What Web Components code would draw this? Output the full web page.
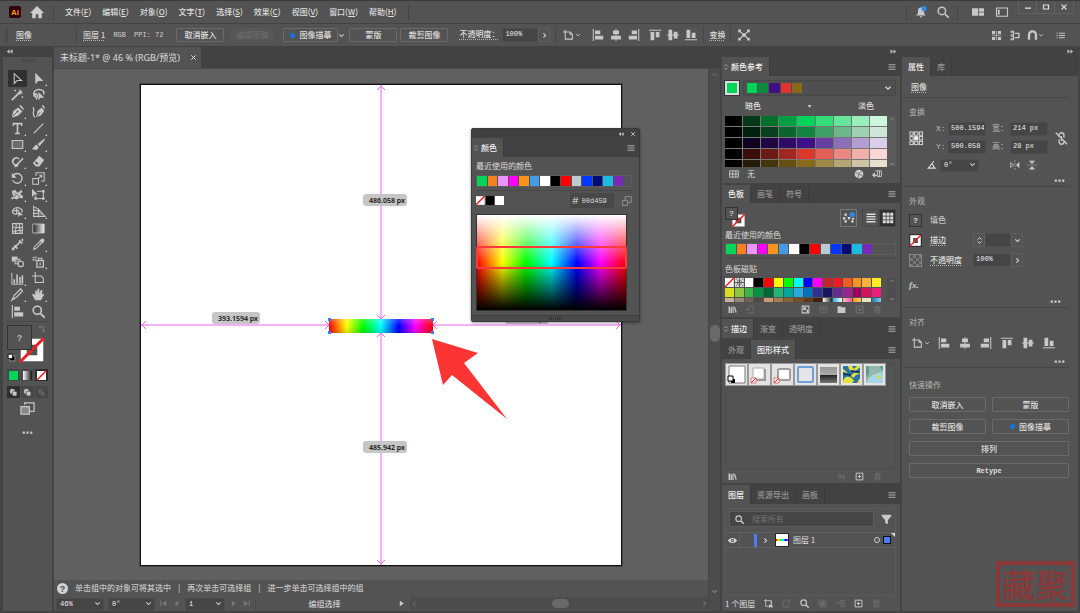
<!DOCTYPE html>
<html lang="zh-CN">
<head>
<meta charset="utf-8">
<meta name="viewport" content="width=device-width, initial-scale=1">
<title>未标题-1</title>
<style>
  html, body { margin: 0; height: 100%; background: #535353; }
  body {
    --panel: #535353; --dark: #424242; --line: #474747; --edge: #666; --field: #454545; --text: #dedede; --dim: #a6a6a6;
    color: var(--text);
    font: 8px/12px "Noto Sans CJK SC", "Noto Sans", sans-serif;
  }
</style>
</head>
<body>
<ai-app></ai-app>
<script>
const BASE = `
  *, *::before, *::after { box-sizing: border-box; }
  :host { display: block; min-width: 0; }
  :host([hidden]) { display: none; }
  button, input, select { font: inherit; color: inherit; margin: 0; padding: 0; border: 0; background: none; border-radius: 0; outline: 0; min-width: 0; }
  a { color: inherit; }
  .mono { font: 7px/12px "Liberation Mono", "Noto Sans CJK SC", monospace; }
  .dot { text-decoration: underline dotted #b5b5b5 1px; text-underline-offset: 2px; }
  .row { display: flex; align-items: center; }
  .grow { flex: 1; }
`;

function define(name, css, html) {
  const fixed = typeof html === 'string' ? document.createElement('template') : null;
  if (fixed) fixed.innerHTML = `<style>${BASE}${css}</style>${html}`;
  customElements.define(name, class extends HTMLElement {
    constructor() { super(); this.attachShadow({ mode: 'open' }); }
    connectedCallback() {
      if (this.shadowRoot.childNodes.length) return;
      if (fixed) this.shadowRoot.append(fixed.content.cloneNode(true));
      else this.shadowRoot.innerHTML = `<style>${BASE}${css}</style>${html(this)}`;
    }
  });
}

/* Icons: 16 x 16 grid; s = stroked, f = filled with the current colour */
const s = (d, w = 1.4) => `<path d="${d}" fill="none" stroke="currentColor" stroke-width="${w}"/>`;
const f = d => `<path d="${d}" fill="currentColor"/>`;
const alignL = f('M1 0h1.4v16H1zM4 2h7v5H4zM4 9h11v5H4z');
const alignC = f('M7.4 0h1.2v16H7.400zM4 2h8v5H4zM1.500 9h13v5H1.500z');
const alignR = f('M13.600 0H15v16h-1.400zM5 2h7v5H5zM1 9h11v5H1z');
const alignT = f('M0 1h16v1.400H0zM2 4h5v11H2zM9 4h5v7H9z');
const alignM = f('M0 7.400h16v1.200H0zM2 1h5v14H2zM9 3.500h5v9H9z');
const alignB = f('M0 13.600h16V15H0zM2 1h5v11H2zM9 5h5v7H9z');
const ICONS = {
  home: f('M8 1 0 9h2.500v6h4v-4.500h3V15h4V9H16z'),
  bell: f('M8 2C4.500 2 4 5 4 7.500S3 11 1.500 12.500h13C13 11 12 10 12 7.500S11.500 2 8 2zM6 13.500h4L8 16z') + '<circle cx="12" cy="3.500" r="3.400" fill="#2a8cf0"/>',
  search: s('M10.700 10.700 15.500 15.500', 2.400) + '<circle cx="6.500" cy="6.500" r="5" fill="none" stroke="currentColor" stroke-width="2"/>',
  work: f('M0 3h8v10H0zM9 3h7v4.500H9zM9 8.500h7V13H9z'),
  screen: s('M.7 2.700h14.600v11H.700z', 1.500) + f('M2.500 5H5v6.500H2.500z'),
  min: f('M2 9h12v2.600H2z'), max: s('M3 4h10v8H3z', 2.400), close: s('m3 3 10 10M13 3 3 13', 2.200),
  down: s('m3 5.500 5 5 5-5', 2.400), right: s('m5.500 3 5 5-5 5', 2.400), left: s('m10.500 3-5 5 5 5', 1.500), up: s('m3 10.500 5-5 5 5', 1.500),
  updown: s('m3.500 6 4.500-4.500L12.500 6M3.500 10l4.500 4.500 4.500-4.500', 2.200),
  dleft: f('M8 3v10L2 8zM15 3v10L9 8z'), dright: f('M1 3v10l6-5zM8 3v10l6-5z'),
  menu: s('M1 3.500h14M1 8h14M1 12.500h14', 1.800),
  dots: f('M1 6.500h3.200v3.200H1zM6.400 6.500h3.200v3.200H6.400zM11.800 6.500H15v3.200h-3.200z'),
  board: s('M3 1v12.500h9.500V7L9.500 4H0M9.500 4v3h3', 1.400),
  alignL, alignC, alignR, alignT, alignM, alignB,
  isolate: f('M5.500 5.500h5v5h-5z') + s('M1 4.500V1.500h3M12 1.500h3v3M15 11.500v3h-3M4 14.500H1v-3M1.500 2l4 4M14.500 2l-4 4M1.500 14l4-4M14.500 14l-4-4', 1.500),
  grid4: f('M1.500 1.500H6v4.500H1.500zM10 1.500h4.500V6H10zM1.500 10H6v4.500H1.500zM10 10h4.500v4.500H10zM7.500 1h1v14h-1zM1 7.500h14v1H1z'),
  snap: f('M1 1h3v3H1zM1 6.500h3v3H1zM1 12h3v3H1z') + s('M5 1v14M7 5h6v6H7', 1.900),
  magnet: s('M3 14V7a5 5 0 0 1 10 0v7', 3.400),
  list: s('M5 4h11M5 8h11M5 12h11', 1.700) + f('M1 3h2v2H1zM1 7h2v2H1zM1 11h2v2H1z'),
  select: s('M4 2v12l3.500-3.500H13z', 1.300), direct: f('M4 1v14l3.700-4H14z'),
  wand: s('M1 15 10 6', 2.200) + f('M11 1l.8 2.600 2.700-.8-1.700 2.100L15 7l-2.800-.3L11 9l-.8-2.500L7.500 6l2.300-1.400zM4 2h2v2H4zM13 10h2v2h-2z'),
  lasso: s('M5 11C1 10 1 3 7 2s9 3 7 6M5 11c-2-1-2-4 0-4s2 5 0 7', 1.800) + f('M8 5v10l2.500-3H15z'),
  pen: f('M1 15 3 7l6-4 5 5-5 5-6 2zM10 1l5 5 1-1-4-5z') + '<path d="M2 14 7 9" stroke="#535353"/><circle cx="8" cy="8" r="1.300" fill="#535353"/>',
  curve: f('M5 15 7 7l5-4 3 4-4 6zM12 1l3 4 1-1-2-4z') + '<path d="m6 14 4-5" stroke="#535353"/>' + s('M1 3c4 2-3 9 3 12', 1.600),
  type: f('M2 1h12v4h-1.500L12 3H9v10l2 .500V15H5v-1.500L7 13V3H4l-.500 2H2z'),
  line: s('M2 14 14 2', 1.600), rect: '<path d="M1.500 3h13v10h-13z" fill="#6d6d6d" stroke="currentColor" stroke-width="1.300"/>',
  brush: f('M15 1 7 7.500l2 2.500L16 2zM6 8.500C3 8 3 12 0 13.500c4 2 8 1 8-2.500z'),
  shaper: s('M9 12A4.500 4.500 0 1 1 10 5M6 13l9-9', 2) + f('M5 11l4 3-5 1z'),
  eraser: f('M9 1l6 5-6 8H5L1 10zM3.500 9.500 6.500 12 8 10.500 5 8z'),
  rotate: s('M3 4a6 6 0 1 1-1 6', 1.600) + f('M1 1v6h6z'),
  scale: s('M1 8h7v7H1zM5 5V1h10v10h-4M7 9l5-5M9 4h3v3', 1.300),
  puppet: f('M1 4l4-2 3 4 5-4 1 3-3 2 4 3-1 3-4-1-3 2-3-1-3 1-1-2 3-1-1-3z') + '<path d="m4 6 7 5M3 11l3-2" stroke="#535353"/>',
  free: f('M0 1v10l3-3h4z') + s('M6 4h8v9H4V9', 1.200) + f('M12.500 2.500h3v3h-3zM12.500 11.500h3v3h-3zM3 11.500h3v3H3z'),
  builder: s('M9 10c-4 3-8 0-7-3s5-5 9-3 3 4 2 5M3 7h7M7 4v7', 1.400) + f('M9 7v8l2-2.500h4z'),
  persp: s('M2 1v14M2 2l6 3v10M2 6l9 2M2 10l12 1M2 14h14L8 5', 1.300),
  mesh: s('M2 2h12v12H2zM2 7c4-3 7 3 12-1M2 11c5 2 7-3 12 0M6 2c3 4-3 7 0 12M11 2c-3 5 2 7 0 12', 1.300),
  gradient: '<linearGradient id="g"><stop stop-color="#222"/><stop offset="1" stop-color="#eee"/></linearGradient><path d="M1 2.500h14v11H1z" fill="url(#g)" stroke="#ccc"/>',
  width: s('M2 14 12 4M4 9l4 4M10 3l4 4', 2) + f('M13 1h2v3h-2zM1 12h3v3H1z'),
  dropper: s('M2 14 3 11 9 5l2 2-6 6z', 1.300) + f('M9 3l4 4 2-3c1-2-2-4-3-3z'),
  blend: f('M1 2h7v6H1z') + '<rect x="5" y="5" width="6" height="6" fill="#858585" stroke="currentColor"/><circle cx="12" cy="11" r="3.300" fill="#535353" stroke="currentColor" stroke-width="1.400"/>',
  spray: s('M6 7h8v8H6zM8 7V4h4v3M10 9.500v3', 1.500) + f('M1 2h2v2H1zM4 2h2v2H4zM1 5h2v2H1zM4 5h1v2H4z'),
  graph: s('M1 1v14h14', 1.200) + f('M3 9h2v5H3zM6.500 3h2v11h-2zM10 6h2v8h-2zM13 4h2v10h-2z'),
  slice: s('M1 15 4 9 12 1l2 3-7 7z', 1.500), hand: f('M4 15 0 8l2-1 2 2V3h2v4l1-6h2v6l2-5 2 1-1 5 2-1 1 1-4 7z'),
  artbd: s('M4 0v13h10V8l-2.500-3H0', 1.300),
  swap: s('M2 4h9v9', 2) + f('M5 0v8L1 4zM7 11h8l-4 4z'),
  mode: '<circle cx="6" cy="6" r="4.500" fill="#bbb"/><rect x="6" y="6" width="8" height="8" rx="2" fill="currentColor" stroke="#444"/>',
  screens: s('M5 3V1h10v9h-5', 1.300) + '<path d="M1 5h9v8H1z" fill="#888" stroke="currentColor" stroke-width="1.300"/>',
  lib: f('M1 2h2.500v12H1zM4.500 4H7v10H4.500zM8 2h2v12H8zM10.500 4l2-1 3 10-2 1z'),
  tbl: s('M1 3h14v10H1zM1 8h14M6 3v10M11 3v10', 1.500), wheel: '<circle cx="8" cy="8" r="7" fill="#ccc"/>' + '<path d="M8 8 2 5M8 8l6 3M8 8l4-6M8 8l-2 7" stroke="#666" stroke-width="1.200"/>',
  addto: s('M5 3h10v9H8M9 3v9M12 3v9', 1.500) + f('M3 6h2v3h3v2H5v3L0 10z'),
  note: s('M3 2h10v12H3M8 8H0M3 5 0 8l3 3', 1.300), kinds: s('M2 2h12v12H2z', 1.800) + f('M4 4h5v5H4zM10 8h3v5h-3z'),
  lines: s('M2 3h12v10H2zM5 6h6M5 8.500h6', 1.300), folder: f('M1 2h5l2 2h7v10H1z'),
  plus: s('M2 2h12v12H2zM8 5v6M5 8h6', 1.700), trash: s('M2 4h12M6 4V2h4v2M4 4v10h8V4M6.500 6v6M9.500 6v6', 1.300),
  unlink: s('M6 5C2 4 1 10 5 11h2M10 5c5 0 5 6 1 6M2 1l12 14M6 8h5', 1.400),
  chain: s('M5 6V4a3 3 0 0 1 6 0v3M5 9v3a3 3 0 0 0 6 0v-2M1 1l14 14M8 5v6', 1.700),
  scatter: f('M2 2h3v3H2zM6.500 6.500h3v3h-3zM2 11h3v3H2zM11 11h3v3h-3zM5 5l1 1-1 0zM0 7h3v3H0zM12 8h3v2h-3z') + '<circle cx="12.500" cy="3.500" r="3.500" fill="#2f86e4"/>',
  rows: s('M2 3h12M2 6.300h12M2 9.600h12M2 13h12', 1.700), cells: f('M1 1h4v4H1zM6 1h4v4H6zM11 1h4v4h-4zM1 6h4v4H1zM6 6h4v4H6zM11 6h4v4h-4zM1 11h4v4H1zM6 11h4v4H6zM11 11h4v4h-4z'),
  funnel: f('M1 1h14v2L10 9v6l-4-2V9L1 3z'), eye: f('M0 8c3-6 13-6 16 0-3 6-13 6-16 0z') + '<circle cx="8" cy="8" r="3" fill="#535353"/><circle cx="8" cy="8" r="1.500" fill="#ccc"/>',
  crop: s('M3 0v13h7M0 3h13v6M13 3v8', 1.500) + f('M9 10h6v6l-3-2-3 2z'), out: s('M8 4H2v10h10V9M8 9l6-6M10 2h4v4', 1.300),
  clip: s('M2 2h9v9H2zM5 5h9v9H5z', 1.300) + f('M6 6h4v4H6z'), into: s('M7 3h8v10H7M11 3v10M1 3v5h7M6 5l3 3-3 3', 1.300),
  ref: [1, 6, 11].flatMap(y => [1, 6, 11].map(x => `<rect x="${x}" y="${y}" width="3.500" height="3.500" fill="${x === 6 && y === 6 ? '#fff' : 'none'}" stroke="currentColor"/>`)).join('') + s('M4 2.700h2M10 2.700h1M4 13h2M10 13h1M2.700 5v1M2.700 10v1M13 5v1M13 10v1', 1),
  angle: s('M14 13H2L11 2M7 6c3 1 4 4 4 7', 1.800), fliph: s('M1 4v8l5-4zM8 1v2M8 5v2M8 9v2M8 13v2', 1.300) + f('M15 3v10L9.500 8z'), flipv: s('M1 8h2M5 8h2M9 8h2M13 8h2', 1.300) + f('M3 1h10L8 6.500zM3 15h10L8 9.500z'),
  first: f('M2 3h2v10H2zM13 3v10L5 8z'), prev: f('M11 3v10L4 8z'), next: f('M5 3v10l7-5z'), last: f('M12 3h2v10h-2zM3 3v10l8-5z'),
  copies: s('M1 7h8v8H1zM5 7V1h10v9H9', 1.400),
  help: '<circle cx="8" cy="8" r="8" fill="currentColor"/><text x="8" y="12.500" text-anchor="middle" font-family="Liberation Sans" font-weight="bold" font-size="13" fill="#4a4a4a">?</text>',
  deflt: '<path d="M5 5h9v9H5z" fill="#000" stroke="#ddd"/><path d="M2 2h8v8H2z" fill="#fff" stroke="#000" stroke-width="1.500"/>',
  box: '<path d="M2.500 2.500h11v11h-11z" fill="none" stroke="#fff" stroke-width="4"/><path d="M0 16 16 0" stroke="#e8202a" stroke-width="2"/>',
  none: '<path d="M0 0h16v16H0z" fill="#fff"/><path d="M0 16 16 0" stroke="#f01818" stroke-width="2.500"/>',
  reg: '<path d="M0 0h16v16H0z" fill="#ddd"/><circle cx="8" cy="8" r="4" fill="none" stroke="#444"/><path d="M8 0v16M0 8h16M2 2l2 2M14 2l-2 2M2 14l2-2M14 14l-2-2" stroke="#444" stroke-width="1.500"/>'
};
define('ui-icon', ':host { display: block; flex: none; width: var(--size, 12px); height: var(--size, 12px); } svg { display: block; width: 100%; height: 100%; overflow: visible; }',
  el => `<svg viewBox="0 0 16 16" aria-hidden="true">${ICONS[el.getAttribute('name')] || ''}</svg>`);

define('ui-button', `
  button { display: flex; width: 100%; height: var(--h, 14px); align-items: center; justify-content: center; gap: 4px; border: 1px solid #6a6a6a; border-radius: 1px; font-weight: 500; white-space: nowrap; }
  button:disabled { color: #6b6b6b; border-color: #585858; background: #575757; }
  i { width: 5px; height: 5px; border-radius: 50%; background: #1473e6; }
`, el => `<button type="button" ${el.hasAttribute('off') ? 'disabled' : ''}>${el.hasAttribute('spot') ? '<i></i>' : ''}<slot></slot></button>`);

define('icon-button', `
  :host { display: inline-block; flex: none; }
  button { display: block; color: var(--c, #c8c8c8); }
`, el => `<button type="button" aria-label="${el.getAttribute('label') || el.getAttribute('name')}"><ui-icon name="${el.getAttribute('name')}"></ui-icon></button>`);

/* Text field with its label */
define('ui-field', `
  label { display: flex; align-items: center; }
  span { flex: none; width: var(--lw, auto); color: var(--lc, #b8b8b8); white-space: nowrap; font-family: "Liberation Mono", "Noto Sans CJK SC", monospace; }
  input { flex: 1; width: 20px; height: 14px; padding: 0 1px 2px 2px; background: var(--field); border: 1px solid #4d4d4d; font: 7px/10px "Liberation Mono", monospace; color: #f0f0f0; }
`, el => `<label><span class="${el.hasAttribute('dotted') ? 'dot' : ''}">${el.getAttribute('label')}</span><input value="${el.getAttribute('value') || ''}" aria-label="${el.getAttribute('name') || el.getAttribute('label')}"></label>`);

define('ui-select', `
  :host { position: relative; }
  select { appearance: none; width: 100%; height: 13px; padding: 0 14px 1px 3px; background: var(--field); border: 1px solid #4d4d4d; font: 7px/10px "Liberation Mono", monospace; color: #f0f0f0; }
  ui-icon { --size: 7px; position: absolute; right: 3px; top: 3px; pointer-events: none; color: #ccc; }
`, el => `<select aria-label="${el.getAttribute('label')}"><option>${el.getAttribute('value') || ''}</option></select><ui-icon name="down"></ui-icon>`);

define('swatch-strip', `
  :host { border: 1px solid #4b4b4b; }
  div { display: grid; grid-auto-rows: var(--rh, 10px); gap: 1px; overflow: hidden; }
`, el => {
  const c = el.getAttribute('colors').split(' ');
  return `<div style="grid-template-columns:repeat(${el.getAttribute('cols') || c.length},1fr)">${c.map(x => ICONS[x] ? `<ui-icon style="--size:100%" name="${x}"></ui-icon>` : `<b style="background:${x.replace('~', 'linear-gradient(90deg,').replace('^', ')')}"></b>`).join('')}</div>`;
});
const RECENT = '#00d459 #f58020 #e994ff #ff00ff #f7941e #4499e8 #fff #000 #f00 #bccad4 #0038ff #000c76 #1cb9e2 #7a2ab8';

/* Panel tab row: first of the comma-separated names is selected unless "on" says otherwise */
define('panel-tabs', `
  nav { display: flex; height: var(--th, 19px); background: var(--dark); align-items: stretch; }
  button { display: flex; align-items: center; gap: 2px; padding: 0 6px; border-right: 1px solid #3b3b3b; color: #949494; font-weight: 500; white-space: nowrap; }
  button.on { background: var(--panel); color: #f0f0f0; }
  .wide button.on { padding: 0 6px 0 1px; }
  .updn { --size: 6px; color: #aaa; }
  .m { margin: auto 4px auto auto; --size: 8px; color: #b8b8b8; }
`, el => {
  const on = +(el.getAttribute('on') || 0);
  return `<nav class="${el.hasAttribute('fold') ? 'wide' : ''}">${el.getAttribute('tabs').split(',').map((t, i) => `<button type="button" class="${i === on ? 'on' : ''}">${i === on && el.hasAttribute('fold') ? '<ui-icon class="updn" name="updown"></ui-icon>' : ''}${t}</button>`).join('')}${el.hasAttribute('plain') ? '' : '<ui-icon class="m" name="menu"></ui-icon>'}</nav>`;
});

define('menu-bar', `
  :host { display: flex; align-items: center; height: 24px; background: var(--panel); border-top: 1px solid #3a3a3a; border-bottom: 1px solid #434343; padding-left: 9px; }
  .logo { width: 12px; height: 12px; flex: none; }
  .home { margin-left: 9px; --size: 14px; color: #cfcfcf; }
  .sep { width: 1px; height: 15px; background: #464646; }
  nav { display: flex; gap: 11px; padding: 0 11px 0 11px; }
  nav a { text-decoration: none; white-space: nowrap; font-weight: 500; }
  .tools { display: flex; align-items: center; color: #cfcfcf; }
  .win { display: flex; align-self: start; margin: 0 6px 0 10px; height: 13px; border: 1px solid #626262; border-top: 0; }
  .win button { width: 18px; display: grid; place-items: center; border-right: 1px solid #626262; --size: 8px; }
  .win button:last-child { border: 0; }
`, `
  <svg class="logo" viewBox="0 0 12 12"><rect width="12" height="12" rx="2" fill="#330000"/><text x="6" y="9" text-anchor="middle" font-family="Liberation Sans" font-weight="bold" font-size="8" fill="#ff9a00">Ai</text></svg>
  <ui-icon class="home" name="home"></ui-icon><span class="sep" style="margin-left:9px"></span>
  <nav>
    <a href="#">文件(<u>F</u>)</a><a href="#">编辑(<u>E</u>)</a><a href="#">对象(<u>O</u>)</a><a href="#">文字(<u>T</u>)</a><a href="#">选择(<u>S</u>)</a><a href="#">效果(<u>C</u>)</a><a href="#">视图(<u>V</u>)</a><a href="#">窗口(<u>W</u>)</a><a href="#">帮助(<u>H</u>)</a>
  </nav>
  <span class="sep"></span><span class="grow"></span>
  <div class="tools"><span class="sep"></span>
    <icon-button style="margin-left:8px" name="bell"></icon-button><icon-button style="margin-left:10px" name="search"></icon-button>
    <span class="sep" style="margin:0 14px 0 8px"></span><icon-button name="work"></icon-button><icon-button style="margin-left:12px" name="screen"></icon-button>
  </div>
  <div class="win"><button aria-label="最小化"><ui-icon name="min"></ui-icon></button><button aria-label="最大化"><ui-icon name="max"></ui-icon></button><button aria-label="关闭"><ui-icon name="close"></ui-icon></button></div>
`);

define('control-bar', `
  :host { display: flex; align-items: center; height: 23px; background: var(--panel); border-bottom: 1px solid #434343; white-space: nowrap; font-weight: 500; }
  .grip { width: 3px; height: 13px; margin: 0 8px 0 5px; background: repeating-linear-gradient(#424242 0 1px, transparent 1px 2px); }
  .sep { width: 1px; height: 16px; background: #464646; flex: none; }
  .what { width: 60px; }
  .info { display: flex; gap: 8px; padding: 0 13px 0 6px; color: #d0d0d0; }
  .step { width: 12px; height: 14px; border: 1px solid #5e5e5e; display: grid; place-items: center; --size: 7px; }
  .al { display: flex; gap: 6px; padding: 0 12px 0 11px; }
  .al icon-button:nth-child(4) { margin-left: 3px; }
  .right { display: flex; gap: 6px; padding-right: 15px; --size: 11px; align-items: center; }
`, `
  <span class="grip"></span><span class="what"><span class="dot">图像</span></span><span class="sep"></span>
  <div class="info"><span class="dot">图层 1</span><span class="mono">RGB</span><span class="mono">PPI: 72</span></div>
  <ui-button style="width:48px">取消嵌入</ui-button>
  <ui-button style="width:42px;margin-left:7px" off>编辑原稿</ui-button>
  <ui-button style="width:55px;margin-left:10px" spot>图像描摹</ui-button>
  <icon-button style="--size:7px" name="down"></icon-button>
  <ui-button style="width:48px;margin-left:4px">蒙版</ui-button>
  <ui-button style="width:48px;margin:0 11px 0 3px">裁剪图像</ui-button>
  <ui-field style="width:79px;--lw:43px;--lc:#dedede" dotted label="不透明度：" value="100%"></ui-field>
  <button class="step" aria-label="不透明度滑块"><ui-icon name="right"></ui-icon></button>
  <span class="sep" style="margin:0 7px 0 5px"></span>
  <icon-button name="board"></icon-button><icon-button style="--size:6px" name="down"></icon-button>
  <div class="al"><icon-button name="alignL"></icon-button><icon-button name="alignC"></icon-button><icon-button name="alignR"></icon-button><icon-button name="alignT"></icon-button><icon-button name="alignM"></icon-button><icon-button name="alignB"></icon-button></div>
  <span class="sep" style="margin-left:-6px"></span><span class="dot" style="margin:0 5px">变换</span><span class="sep" style="margin-right:7px"></span>
  <icon-button name="isolate"></icon-button><span class="grow"></span>
  <div class="right"><icon-button name="grid4"></icon-button><icon-button name="snap" style="margin-left:2px"></icon-button><icon-button name="magnet"></icon-button><icon-button style="--size:6px;margin-left:-6px" name="down"></icon-button><icon-button style="margin-left:6px;--size:9px" name="list"></icon-button></div>
`);

const TOOLS = 'select direct. wand lasso pen. curve type. line. rect. brush. shaper. eraser. rotate. scale. puppet. free. builder. persp. mesh gradient width dropper. blend spray. graph. artbd slice. hand. alignL search'.split(' ');
define('tool-box', `
  :host { background: var(--panel); border-left: 3px solid #434343; border-right: 2px solid #434343; color: #c8c8c8; }
  .head { height: 10px; background: var(--dark); padding: 1px 3px; --size: 7px; }
  .grip { width: 14px; height: 3px; margin: 2px auto 0; background: repeating-linear-gradient(90deg, #424242 0 1px, transparent 1px 2px); }
  .tools { display: grid; grid-template-columns: 21px 21px; justify-content: center; grid-auto-rows: 1fr; height: 250px; margin-top: 8px; }
  .tools button { display: grid; place-items: center; position: relative; --size: 13px; margin: 0 1px; }
  .tools .on { background: #303030; border-radius: 1px; }
  .tools .more::after { content: ""; position: absolute; right: 1px; bottom: 1px; border: 1px solid #ccc; border-left-color: transparent; border-top-color: transparent; }
  hr { border: 0; border-top: 1px solid #474747; margin: 1px 4px 2px; }
  .paint { position: relative; height: 40px; }
  .fill { position: absolute; left: 4px; top: 1px; width: 25px; height: 25px; background: #535353; border: 1px solid #333; display: grid; place-items: center; font: bold 9px "Liberation Sans", sans-serif; color: #bbb; z-index: 1; }
  .stroke { position: absolute; left: 17px; top: 14px; --size: 24px; }
  .swap { position: absolute; left: 35px; top: 1px; --size: 8px; color: #777; }
  .def { position: absolute; left: 4px; top: 29px; --size: 9px; }
  .three { display: grid; grid-template-columns: repeat(3, 13px); justify-content: center; height: 12px; margin-top: 5px; gap: 1px; }
  .three button { display: grid; place-items: center; background: #474747; --size: 9px; }
  .three i { width: 9px; height: 9px; }
  .bottom { display: grid; justify-items: center; gap: 10px; margin-top: 4px; }
`, `
  <div class="head"><ui-icon name="dleft"></ui-icon></div><div class="grip"></div>
  <div class="tools">${TOOLS.map((t, i) => `<button type="button" aria-label="${t.replace('.', '')}" class="${i ? '' : 'on'} ${t.endsWith('.') ? 'more' : ''}"><ui-icon name="${t.replace('.', '')}"></ui-icon></button>`).join('')}</div>
  <hr>
  <div class="paint"><span class="fill">?</span><ui-icon class="stroke" name="box"></ui-icon><ui-icon class="swap" name="swap"></ui-icon><ui-icon class="def" name="deflt"></ui-icon></div>
  <div class="three"><button aria-label="颜色"><i style="background:#00d459"></i></button><button aria-label="渐变"><i style="background:linear-gradient(90deg,#fff,#111)"></i></button><button aria-label="无" style="background:#2d2d2d"><ui-icon name="none"></ui-icon></button></div>
  <div class="three"><button aria-label="正常绘图" style="background:#2f2f2f"><ui-icon name="mode"></ui-icon></button><button aria-label="背面绘图"><ui-icon name="mode"></ui-icon></button><button aria-label="内部绘图"><ui-icon style="opacity:.2" name="mode"></ui-icon></button></div>
  <div class="bottom"><ui-icon style="--size:15px" name="screens"></ui-icon><ui-icon style="--size:11px" name="dots"></ui-icon></div>
`);

define('color-window', `
  :host { background: var(--panel); border: 1px solid #3a3a3a; border-radius: 2px; box-shadow: 0 1px 3px #0006; }
  .head { height: 9px; background: #404040; display: flex; justify-content: flex-end; align-items: center; gap: 6px; padding-right: 3px; --size: 6px; color: #ccc; }
  .body { padding: 3px 7px 4px 4px; }
  .strip { display: flex; border: 1px solid #5c5c5c; margin-top: 3px; }
  .strip swatch-strip { width: 146px; border: 0; --rh: 10px; }
  hr { border: 0; border-top: 1px solid #474747; margin: 3px 0 2px; }
  .hex { display: flex; align-items: center; height: 15px; }
  .hex swatch-strip { width: 28px; --rh: 9px; border: 0; }
  .hex label { margin: 0 8px 0 auto; width: 44px; height: 15px; padding-left: 2px; display: flex; align-items: center; gap: 3px; background: #484848; font: 11px/12px "Liberation Mono", monospace; }
  .hex input { width: 28px; font: 7px/10px "Liberation Mono", monospace; }
  .map { position: relative; width: 151px; height: 97px; margin-top: 6px; border: 1px solid #333;
    background: linear-gradient(#fff, #fff0 50%, #0000 50%, #000), linear-gradient(90deg, #f00, #ff0 17%, #0f0 33%, #0ff 50%, #00f 67%, #f0f 83%, #f00); }
  .map i { position: absolute; inset: 31px -1px 41px; border: 2px solid #fb3a3c; border-radius: 2px; }
  .foot { height: 6px; border-top: 1px solid #3d3d3d; background: #4a4a4a; }
  .foot i { display: block; width: 14px; height: 3px; margin: 1px auto; background: repeating-linear-gradient(90deg, #333 0 1px, transparent 1px 2px); }
`, `
  <div class="head"><ui-icon name="dleft"></ui-icon><ui-icon name="close"></ui-icon></div>
  <panel-tabs fold tabs="颜色"></panel-tabs>
  <div class="body"><div>最近使用的颜色</div><div class="strip"><swatch-strip colors="${RECENT}"></swatch-strip></div><hr>
  <div class="hex"><swatch-strip colors="none #000 #fff"></swatch-strip><label>#<input aria-label="十六进制颜色" value="00d459"></label><ui-icon style="--size:10px;color:#999" name="copies"></ui-icon></div>
  <div class="map"><i></i></div></div>
  <div class="foot"><i></i></div>
`);

define('art-canvas', `
  :host { position: relative; display: grid; place-items: center; background: #606060; overflow: hidden; }
  .board { position: relative; width: 480px; height: 480px; background: #fff; outline: 1px solid #111; box-shadow: 0 0 0 2px #2226; }
  svg { position: absolute; inset: 0; width: 480px; height: 480px; overflow: visible; }
  .tag { position: absolute; padding: 0 2px 0 6px; height: 12px; border-radius: 3px; background: #c6c6c6; color: #111; font: 600 7px/14px "Noto Sans", sans-serif; white-space: nowrap; }
  .img { position: absolute; left: 188px; top: 234px; width: 104px; height: 14px; background: linear-gradient(#fff3, #fff0 50%, #0002), linear-gradient(90deg, #f00, #ff0 17%, #0f0 33%, #0ff 50%, #00f 67%, #f0f 83%, #f00); }
  color-window { position: absolute; right: 68px; top: 59px; width: 169px; }
`, `
  <div class="board">
    <div class="img"></div>
    <svg viewBox="0 0 480 480" fill="none" stroke="#f661f6"><path d="M240 0v234M240 248v232M0 240h188M292 240h188"/><path d="m236 5 4-4 4 4M236 230l4 4 4-4M236 252l4-4 4 4M236 475l4 4 4-4M5 236l-4 4 4 4M184 236l4 4-4 4M296 236l-4 4 4 4M475 236l4 4-4 4"/><path d="M187 233h3v3h-3zM187 246h3v3h-3zM290 233h3v3h-3zM290 246h3v3h-3z" fill="#3f7df0" stroke="none"/><path d="M291 254 337 268 323 278 366 334 311 290 302 300z" fill="#fd3434" stroke="none"/></svg>
    <span class="tag" style="left:222px;top:109px">486.058 px</span><span class="tag" style="left:71px;top:227px">393.1594 px</span><span class="tag" style="left:364px;top:227px">393.159 px</span><span class="tag" style="left:222px;top:356px">485.942 px</span>
  </div>
  <color-window></color-window>
`);

define('doc-view', `
  :host { display: grid; grid-template: 22px minmax(0, 1fr) 31px / minmax(0, 1fr) 12px; background: var(--panel); }
  .tabs { grid-column: 1 / 3; background: var(--dark); display: flex; border-bottom: 1px solid #4a4a4a; }
  .tab { display: flex; align-items: center; gap: 10px; padding: 0 4px 0 6px; background: var(--panel); font: 9px/12px "Noto Sans", "Noto Sans CJK SC", sans-serif; --size: 7px; white-space: nowrap; }
  .vs { grid-row: 2 / 4; grid-column: 2; display: flex; flex-direction: column; align-items: center; justify-content: space-between; background: #4c4c4c; border-left: 1px solid #474747; padding: 2px 0 16px; --size: 7px; color: #888; }
  .vs i, .hs i { width: 10px; height: 17px; border-radius: 5px; background: #696969; }
  .hs i { width: 17px; height: 9px; }
  .foot { display: grid; grid-template-rows: 16px 15px; font-weight: 500; }
  .hint { display: flex; align-items: center; gap: 7px; padding-left: 3px; color: #c4c4c4; white-space: nowrap; }
  .hint ui-icon { --size: 11px; color: #d2d2d2; }
  .nav { display: flex; align-items: center; --size: 9px; color: #777; gap: 4px; padding-left: 2px; }
  .nav .now { flex: none; width: 138px; text-align: center; color: #ccc; border-left: 1px solid #4a4a4a; }
  .hs { flex: 1; display: flex; justify-content: space-between; align-items: center; background: #4c4c4c; height: 13px; }
`, `
  <div class="tabs"><div class="tab">未标题-1* @ 46 % (RGB/预览)<ui-icon name="close"></ui-icon></div></div>
  <art-canvas></art-canvas>
  <div class="vs"><ui-icon name="up"></ui-icon><i></i><ui-icon name="down"></ui-icon></div>
  <div class="foot">
    <div class="hint"><ui-icon name="help"></ui-icon><span>单击组中的对象可将其选中</span><span>|</span><span>再次单击可选择组</span><span>|</span><span>进一步单击可选择组中的组</span></div>
    <div class="nav"><ui-select style="width:48px" label="缩放" value="46%"></ui-select><ui-select style="width:47px" label="旋转" value="0°"></ui-select>
      <ui-icon name="first"></ui-icon><ui-icon name="prev"></ui-icon><ui-select style="width:40px" label="画板" value="1"></ui-select><ui-icon name="next"></ui-icon><ui-icon name="last"></ui-icon>
      <span class="now">编组选择</span><ui-icon style="color:#ccc" name="next"></ui-icon>
      <div class="hs"><ui-icon name="left"></ui-icon><i></i><ui-icon style="--size:7px" name="right"></ui-icon></div></div>
  </div>
`);

define('guide-panel', `
  :host { padding: 4px 4px 0 3px; height: 107px; }
  .base { width: 14px; height: 14px; border: 2px solid #ddd; outline: 1px solid #333; background: #00d459; margin-right: 4px; }
  .rule { flex: 1; display: flex; align-items: center; height: 16px; border: 1px solid #484848; background: #4f4f4f; padding: 0 3px; --size: 8px; justify-content: space-between; }
  .rule swatch-strip { width: 55px; --rh: 10px; border: 0; }
  .names { display: grid; grid-template-columns: 1fr 1fr 1fr; padding: 4px 22px 4px 20px; font-weight: 500; height: 20px; }
  .names span:nth-child(2) { text-align: center; font-size: 6px; } .names span:nth-child(3) { text-align: right; }
  .main { display: flex; height: 51px; overflow: hidden; }
  .main swatch-strip { width: 164px; border: 0; --rh: 10px; background: #777; }
  .bar { width: 9px; display: flex; flex-direction: column; justify-content: space-between; align-items: center; --size: 6px; background: #5b5b5b; color: #999; }
  .foot { display: flex; gap: 8px; align-items: center; height: 14px; padding: 0 14px 0 4px; --size: 10px; }
`, `
  <div class="row"><span class="base"></span><div class="rule"><swatch-strip colors="#00d459 #0e8a40 #3f0f85 #dc372c #876b17"></swatch-strip><ui-icon name="down"></ui-icon></div></div>
  <div class="names"><span>暗色</span><span>▾</span><span>淡色</span></div>
  <div class="main"><swatch-strip cols="9" colors="#000 #033a19 #00702d #00a042 #00d459 #33dd7a #66e69b #99eebd #ccf6de #000 #02210f #084020 #0c6330 #10853f #3fa066 #6fb68c #9fd0b2 #cfe7d9 #000 #0f0221 #1f0742 #2f0b66 #3f0f85 #653fa0 #8c6fb6 #b29fd0 #d9cfe7 #000 #380d0a #6c1b15 #a12820 #dc372c #e35f56 #ea8780 #f1afab #f8d7d5 #000 #221b05 #44360c #655011 #876b17 #9f8945 #b7a674 #cfc4a2 #e7e1d1"></swatch-strip><div class="bar"><ui-icon name="up"></ui-icon><ui-icon name="down"></ui-icon></div></div>
  <div class="foot"><icon-button name="tbl"></icon-button><span>无</span><span class="grow"></span><icon-button name="wheel"></icon-button><icon-button name="addto"></icon-button></div>
`);

define('swatches-panel', `
  :host { padding: 3px 4px 0 3px; height: 114px; }
  .top { display: flex; height: 23px; align-items: center; }
  .fs { position: relative; width: 22px; height: 22px; }
  .fs b { position: absolute; left: 0; top: 0; width: 13px; height: 13px; border: 1px solid #333; background: #535353; z-index: 1; font: bold 8px/11px "Liberation Sans", sans-serif; text-align: center; color: #ccc; }
  .fs ui-icon { position: absolute; left: 7px; top: 7px; --size: 13px; }
  .v { display: grid; place-items: center; width: 17px; height: 18px; border: 1px solid #484848; --size: 12px; color: #ddd; }
  .strip { display: flex; border: 1px solid #5c5c5c; margin: 2px 0 3px; }
  .strip swatch-strip { width: 146px; border: 0; }
  .sec { border-top: 1px solid #474747; padding: 4px 0 3px; }
  .main { display: flex; height: 24px; overflow: hidden; justify-content: space-between; }
  .main swatch-strip { width: 156px; border: 0; --rh: 9px; }
  .bar { width: 9px; display: flex; flex-direction: column; justify-content: space-between; align-items: center; --size: 6px; color: #999; background: #4e4e4e; }
  .foot { display: flex; align-items: center; height: 14px; gap: 9px; padding: 0 14px 0 3px; --size: 9px; }
  .off { --c: #757575; }
`, `
  <div class="top"><div class="fs"><b>?</b><ui-icon name="box"></ui-icon></div><span class="grow"></span><button class="v" aria-label="颜色主题" style="margin-right:5px;border-color:#777"><ui-icon name="scatter"></ui-icon></button><button class="v" aria-label="列表视图"><ui-icon name="rows"></ui-icon></button><button class="v" aria-label="网格视图" style="background:#303030"><ui-icon name="cells"></ui-icon></button></div>
  <div>最近使用的颜色</div><div class="strip"><swatch-strip colors="${RECENT}"></swatch-strip></div>
  <div class="sec">色板磁贴</div>
  <div class="main"><swatch-strip cols="16" colors="none reg #fff #000 #f00 #ff0 #0f0 #0ff #00f #f0f #c1272d #ed1c24 #f15a24 #f7931e #fbb03b #fcee21 #d9e021 #8cc63f #39b54a #009245 #006837 #22b573 #00a99d #29abe2 #0071bc #2e3192 #1b1464 #662d91 #93278f #9e005d #d4145a #ed1e79 #c7b299 #998675 #736357 #534741 #c69c6d #a67c52 #8c6239 #754c24 #603813 #42210b ~#fff,#222^ ~#29abe2,#fff^ ~#fbb,#f5a^ ~#f7931e,#fc6^ #e8e4c8 ~#27b,#8ce^"></swatch-strip><div class="bar"><ui-icon name="up"></ui-icon><ui-icon name="down"></ui-icon></div></div>
  <div class="foot"><icon-button name="lib"></icon-button><icon-button class="off" name="note"></icon-button><span class="grow"></span><icon-button name="kinds"></icon-button><icon-button class="off" name="lines"></icon-button><icon-button name="folder"></icon-button><icon-button class="off" name="plus"></icon-button><icon-button class="off" name="trash"></icon-button></div>
`);

define('styles-panel', `
  :host { padding: 4px 4px 0 3px; height: 124px; display: flex; flex-direction: column; }
  .box { flex: 1; box-shadow: inset 0 0 0 1px #4d4d4d; }
  .g { display: grid; grid-template-columns: repeat(7, 23px); }
  .g button { height: 23px; background: #e3e3e3; border: 1px solid #999; display: grid; place-items: center; }
  svg { width: 19px; height: 19px; display: block; }
  .foot { display: flex; align-items: center; height: 14px; gap: 9px; padding: 0 14px 0 3px; --size: 9px; }
  .off { --c: #757575; }
`, `
  <div class="box"><div class="g">
    <button aria-label="默认样式"><svg viewBox="0 0 19 19"><path d="M2 1h16v17H2z" fill="#fff" stroke="#777"/><path d="M4 14h4v4H4z"/><path d="M1 11h5v5H1z" fill="#fff" stroke="#000"/></svg></button>
    <button aria-label="投影"><svg viewBox="0 0 19 19"><path d="M4 4h12v12H4z" fill="#999"/><path d="M3 3h11v11H3z" fill="#fff" stroke="#aaa"/><path d="M1 13h5v5H1z" fill="#fff" stroke="#d77"/><path d="m1 18 5-5" stroke="#e22"/></svg></button>
    <button aria-label="圆角 2 pt"><svg viewBox="0 0 19 19"><rect x="5" y="4" width="12" height="11" rx="1" fill="#fff" stroke="#888" stroke-width="1.500"/><path d="M1 13h5v5H1z" fill="#fff" stroke="#d77"/><path d="m1 18 5-5" stroke="#e22"/></svg></button>
    <button aria-label="实时对称"><svg viewBox="0 0 19 19"><rect x="2" y="2" width="15" height="15" rx="1" fill="#e6e6e6" stroke="#6da0d6" stroke-width="2"/></svg></button>
    <button aria-label="黄昏"><svg viewBox="0 0 19 19"><linearGradient id="d" x2="0" y2="1"><stop stop-color="#999"/><stop offset=".48" stop-color="#aaa"/><stop offset=".5" stop-color="#222"/><stop offset="1" stop-color="#777"/></linearGradient><path d="M1 2h17v16H1z" fill="url(#d)"/></svg></button>
    <button aria-label="植物"><svg viewBox="0 0 19 19"><path d="M1 1h17v17H1z" fill="#2b70a8"/><path d="M1 18c0-8 8-8 11-2l-2 2zM6 1c1 6 6 7 9 4s3-2 3-4h-3l-3 3-2-3zM1 4l5 4-5-1zM9 11c2-4 6-4 9-2-3 0-5 1-6 4zM15 18l3-5v5z" fill="#e5e33a"/><path d="m1 9 8 1M9 6l8 1" stroke="#123d66" stroke-width="2"/></svg></button>
    <button aria-label="水彩"><svg viewBox="0 0 19 19"><path d="M1 1h17v17H1z" fill="#93b7a8"/><path d="M1 18c3-6 5-9 17-11v11z" fill="#a9d5e8"/><path d="M1 1h3v8l-3 4zM14 1h4v5z" fill="#5e9a97"/><circle cx="14" cy="12" r="2" fill="#c9dc62"/></svg></button>
  </div></div>
  <div class="foot"><icon-button name="lib"></icon-button><span class="grow"></span><icon-button class="off" name="unlink"></icon-button><icon-button name="plus"></icon-button><icon-button class="off" name="trash"></icon-button></div>
`);

define('layers-panel', `
  :host { padding: 4px 4px 0 3px; flex: 1; display: flex; flex-direction: column; }
  .box { flex: 1; border: 1px solid #5a5a5a; display: flex; flex-direction: column; }
  .find { display: flex; align-items: center; padding: 2px 3px 5px; gap: 7px; --size: 11px; }
  .find label { flex: 1; display: flex; align-items: center; gap: 8px; height: 16px; padding: 0 5px; background: var(--field); border: 1px solid #5c5c5c; --size: 9px; color: #ccc; }
  .find input { flex: 1; } input::placeholder { color: #727272; opacity: 1; }
  .layer { position: relative; display: flex; align-items: center; height: 16px; border: solid #606060; border-width: 1px 0; padding-left: 2px; }
  .layer .eye { width: 12px; height: 14px; border-right: 1px solid #5e5e5e; --size: 9px; display: grid; place-items: center start; }
  .bar { width: 3px; height: 13px; background: #4b7bf5; margin: 0 5px 0 14px; }
  .thumb { width: 14px; height: 14px; margin: 0 4px 0 6px; border: 1px solid #222; background: linear-gradient(90deg, red, #fd0, #0f0, #0ff, #00f, #f0f) center / 100% 2px no-repeat #fff; }
  .ring { width: 6px; height: 6px; border: 1px solid #ccc; border-radius: 50%; margin-left: auto; }
  .sel { width: 6px; height: 6px; background: #4b7bf5; outline: 1px solid #111; margin: 0 5px 0 4px; }
  .corner { position: absolute; right: 0; top: 0; border: 2px solid #ddd; border-left-color: transparent; border-bottom-color: transparent; }
  .foot { display: flex; align-items: center; height: 15px; gap: 9px; padding-right: 12px; --size: 9px; }
  .off { --c: #757575; }
`, `
  <div class="box"><div class="find"><label><ui-icon name="search"></ui-icon><input type="search" aria-label="搜索图层" placeholder="搜索所有"></label><icon-button name="funnel"></icon-button></div>
  <div class="layer"><span class="eye"><ui-icon name="eye"></ui-icon></span><span class="bar"></span><ui-icon style="--size:7px" name="right"></ui-icon><span class="thumb"></span><span>图层 1</span><span class="ring"></span><span class="sel"></span><span class="corner"></span></div></div>
  <div class="foot"><span>1 个图层</span><icon-button name="crop"></icon-button><icon-button class="off" name="out"></icon-button><icon-button name="search"></icon-button><icon-button class="off" name="clip"></icon-button><icon-button class="off" name="into"></icon-button><icon-button name="plus"></icon-button><icon-button class="off" name="trash"></icon-button></div>
`);

define('panel-dock', `
  :host { display: flex; flex-direction: column; background: var(--panel); border-left: 2px solid #434343; border-right: 2px solid #434343; overflow: hidden; }
  .head { height: 10px; background: var(--dark); display: flex; justify-content: flex-end; padding: 1px 3px; --size: 7px; color: #bbb; }
  .gap { height: 2px; flex: none; background: #434343; }
`, `
  <div class="head"><ui-icon name="dright"></ui-icon></div>
  <panel-tabs fold tabs="颜色参考"></panel-tabs><guide-panel></guide-panel><div class="gap"></div>
  <panel-tabs style="--th:18px" tabs="色板,画笔,符号"></panel-tabs><swatches-panel></swatches-panel><div class="gap"></div>
  <panel-tabs fold tabs="描边,渐变,透明度"></panel-tabs><div class="gap"></div>
  <panel-tabs tabs="外观,图形样式" on="1"></panel-tabs><styles-panel></styles-panel><div class="gap"></div>
  <panel-tabs tabs="图层,资源导出,画板"></panel-tabs><layers-panel></layers-panel>
`);

define('props-panel', `
  :host { display: flex; flex-direction: column; background: var(--panel); border-right: 2px solid #444; overflow: hidden; position: relative; }
  .head { height: 10px; background: var(--dark); display: flex; justify-content: flex-end; padding: 1px 4px; --size: 7px; color: #bbb; }
  section { margin-right: 9px; padding: 0 0 0 7px; border-bottom: 1px solid #464646; }
  h3 { margin: 0; font: inherit; color: #b8b8b8; }
  .more { display: flex; justify-content: flex-end; padding-right: 4px; height: 10px; --size: 11px; --c: #ccc; }
  .xf { display: grid; grid-template-columns: 21px 50px 56px 1fr; column-gap: 6px; row-gap: 4px; align-items: center; margin-top: 4px; }
  .xf .ref { grid-row: 1 / 3; --size: 15px; } .xf .link { grid-row: 1 / 3; grid-column: 4; --size: 13px; justify-self: center; }
  .xf .c2 { grid-column: 2; } .xf .c3 { grid-column: 3; }
  .ang { grid-column: 1 / 3; margin-left: 18px; display: flex; align-items: center; gap: 3px; --size: 10px; }
  .ang ui-select { width: 39px; }
  .flip { display: flex; gap: 7px; padding-left: 18px; --size: 10px; }
  .ap { display: grid; grid-template-columns: 13px 34px 50px; column-gap: 8px; align-items: center; height: 20px; font-weight: 500; }
  .sq { width: 13px; height: 13px; border: 1px solid #333; display: grid; place-items: center; font: bold 8px "Liberation Sans", sans-serif; --size: 11px; }
  .chk { background: repeating-conic-gradient(#777 0 25%, #555 0 50%) 0 0 / 6px 6px; border-color: #888; }
  .num { display: flex; width: 50px; --size: 7px; }
  .num button { width: 12px; height: 14px; display: grid; place-items: center; border: 1px solid #5e5e5e; }
  .num ui-field { flex: 1; --lw: 0; }
  .fx { font: italic bold 9px/12px "Liberation Serif", serif; margin-top: 9px; color: #ccc; }
  .al { display: flex; align-items: center; gap: 9px; margin-top: 8px; height: 14px; padding-left: 3px; }
  .quick { display: grid; grid-template-columns: 1fr 1fr; gap: 7px 6px; margin-top: 6px; --h: 15px; }
  .quick .all { grid-column: 1 / 3; }
  .seal { position: absolute; right: 3px; bottom: 4px; width: 79px; height: 46px; border: 4px solid #8a3838; color: #8a3838; display: grid; place-items: center; font-size: 33px; line-height: 38px; font-weight: 500; overflow: hidden; }
`, `
  <div class="head"><ui-icon name="dright"></ui-icon></div>
  <panel-tabs plain tabs="属性,库"></panel-tabs>
  <section style="height:22px;padding-top:5px;font-weight:500"><span style="margin-left:2px" class="dot">图像</span></section>
  <section style="height:89px;padding-top:8px"><h3>变换</h3>
    <div class="xf"><ui-icon class="ref" name="ref"></ui-icon><ui-field class="c2" style="--lw:12px" label="X:" value="500.1594"></ui-field><ui-field class="c3" style="--lw:18px" label="宽：" value="214 px"></ui-field><icon-button class="link" name="chain" label="约束宽度和高度比例"></icon-button>
      <ui-field class="c2" style="--lw:12px" label="Y:" value="500.058"></ui-field><ui-field class="c3" style="--lw:18px" label="高：" value="28 px"></ui-field>
      <div class="ang"><ui-icon name="angle"></ui-icon><ui-select label="旋转角度" value="0°"></ui-select></div><div class="flip"><icon-button name="fliph"></icon-button><icon-button name="flipv"></icon-button></div></div>
    <div class="more" style="margin-top:3px"><icon-button name="dots"></icon-button></div></section>
  <section style="height:121px;padding-top:8px"><h3>外观</h3>
    <div class="ap" style="margin-top:3px"><span class="sq">?</span><span style="color:#c4c4c4">填色</span></div>
    <div class="ap"><span class="sq"><ui-icon name="box"></ui-icon></span><span class="dot">描边</span><div class="num" style="margin-left:1px"><button aria-label="步进"><ui-icon name="updown"></ui-icon></button><ui-field label="" name="描边粗细"></ui-field><button aria-label="选择粗细"><ui-icon name="down"></ui-icon></button></div></div>
    <div class="ap"><span class="sq chk"></span><span class="dot">不透明度</span><div class="num" style="margin-left:1px"><ui-field label="" name="不透明度" value="100%"></ui-field><button aria-label="不透明度滑块"><ui-icon name="right"></ui-icon></button></div></div>
    <div class="fx">fx.</div><div class="more" style="padding-right:8px;margin-top:5px"><icon-button name="dots"></icon-button></div></section>
  <section style="height:60px;padding-top:8px"><h3>对齐</h3>
    <div class="al"><div class="row" style="margin-right:-1px"><icon-button name="board"></icon-button><icon-button style="--size:6px" name="down"></icon-button></div><icon-button name="alignL"></icon-button><icon-button name="alignC"></icon-button><icon-button name="alignR"></icon-button><icon-button name="alignT"></icon-button><icon-button name="alignM"></icon-button><icon-button name="alignB"></icon-button></div>
    <div class="more" style="margin-top:6px"><icon-button name="dots"></icon-button></div></section>
  <section style="padding-top:11px;border:0"><h3>快速操作</h3>
    <div class="quick"><ui-button>取消嵌入</ui-button><ui-button>蒙版</ui-button><ui-button>裁剪图像</ui-button><ui-button spot>图像描摹</ui-button><ui-button class="all">排列</ui-button><ui-button class="all"><span class="mono" style="font-weight:bold">Retype</span></ui-button></div></section>
  <div class="seal">藏聚</div>
`);

define('ai-app', `
  :host { display: grid; grid-template-rows: auto auto minmax(0, 1fr); height: 100vh; border-bottom: 2px solid #444; box-sizing: border-box; }
  main { display: grid; grid-template-columns: 54px minmax(0, 1fr) 182px 178px; min-height: 0; }
`, `
  <menu-bar></menu-bar><control-bar></control-bar>
  <main><tool-box></tool-box><doc-view></doc-view><panel-dock></panel-dock><props-panel></props-panel></main>
`);
</script>
</body>
</html>
